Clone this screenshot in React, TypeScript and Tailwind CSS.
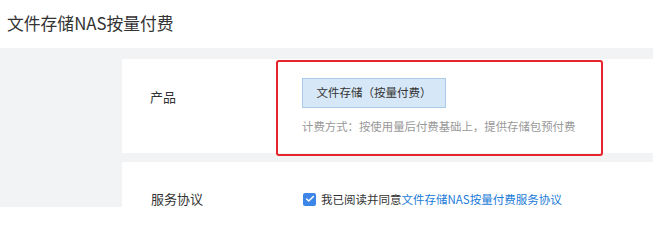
import { Check } from "lucide-react";

// 文件存储NAS 按量付费购买页(局部)
export default function App() {
  return (
    <div className="h-[207px] w-[653px] overflow-hidden bg-[#f2f3f5] font-['Noto_Sans_CJK_SC','Noto_Sans',sans-serif] text-[#333]">
      <div className="flex h-[48px] items-center bg-white pl-[7px] text-[16.8px]">
        文件存储NAS按量付费
      </div>

      <div className="pl-[122px] pt-[11px]">
        {/* 产品 */}
        <div className="flex h-[94px] bg-white">
          <div className="w-[154px] shrink-0 pl-[28px] pt-[29px] text-[13px] leading-[18px]">产品</div>
          <div className="mt-[1px] h-[96px] w-[327px] shrink-0 rounded-[3px] border-2 border-[#e5242b] pl-[24px] pt-[16px]">
            <div className="flex h-[30px] w-[144px] items-center justify-center border border-[#a9cbe8] bg-[#d6e7f7] text-[11.5px] text-[#333]">
              文件存储（按量付费）
            </div>
            <p className="mt-[9px] text-[11.4px] leading-[18px] text-[#999]">
              计费方式：按使用量后付费基础上，提供存储包预付费
            </p>
          </div>
        </div>

        {/* 服务协议 */}
        <div className="mt-[9px] flex h-[80px] bg-white">
          <div className="w-[181px] shrink-0 pl-[29px] pt-[28px] text-[13px] leading-[18px]">服务协议</div>
          <label className="flex h-fit items-center gap-[5px] pt-[28px] text-[11.5px] leading-[18px]">
            <span className="flex h-[13px] w-[13px] items-center justify-center rounded-[2px] bg-[#3d86e8]">
              <Check className="h-[10px] w-[10px] text-white" strokeWidth={3.5} />
            </span>
            <span>
              我已阅读并同意<a className="text-[#1a7bd8]">文件存储NAS按量付费服务协议</a>
            </span>
          </label>
        </div>
      </div>
    </div>
  );
}
